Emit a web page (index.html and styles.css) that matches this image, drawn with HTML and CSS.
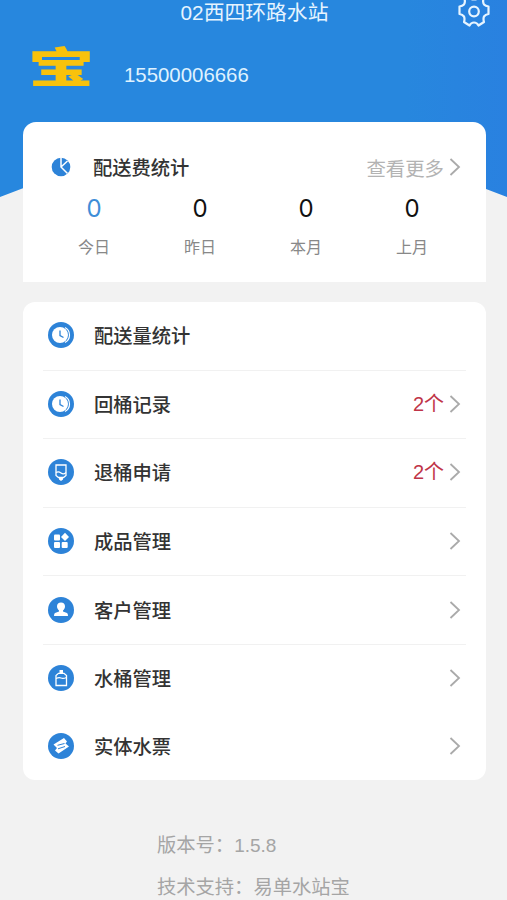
FILE: index.html
```html
<!DOCTYPE html>
<html lang="zh-CN">
<head>
    <meta charset="UTF-8">
    <meta name="viewport" content="width=device-width, initial-scale=1.0">
    <title>02西四环路水站</title>
    <link rel="stylesheet" href="styles.css">
</head>
<body>
    <div class="page">
        <div class="header">
            <h1>02西四环路水站</h1>
            <svg class="settings" viewBox="0 0 34 34" fill="none" stroke="#e6f4ff" stroke-width="2.200" stroke-linejoin="round">
                <path d="M12 2.500Q13 5.500 17 5.500T22 2.500L26.500 5Q25.500 8 27 10.500Q28.500 12 31.500 12.500V20Q28.500 20.500 27 22.500Q26 25 27 28L21.500 31.500Q20 28.500 17 28.500T12.500 31.500L7 28Q8 25 7 22.500Q5.500 20.500 2.500 20V12.500Q5.500 12 7 10.500Q8.500 8 7.500 5Z"/>
                <circle cx="17" cy="17.500" r="4.800"/>
            </svg>
        </div>
        <div class="user">
            <div class="logo"><span>宝</span></div>
            <div class="phone">15500006666</div>
        </div>

        <div class="card stats">
            <div class="stats-head">
                <svg class="icon-pie" viewBox="0 0 20 20">
                    <circle cx="10" cy="10" r="9.300" fill="#2d83d8"/>
                    <path d="M10 0V10L16.500 16.500M10 10L16.500 4" fill="none" stroke="#fff" stroke-width="1.500"/>
                </svg>
                <h2>配送费统计</h2>
                <a class="more">查看更多</a>
                <svg class="arrow" viewBox="0 0 12 20"><path d="M1.500 2L10 10L1.500 18"/></svg>
            </div>
            <div class="stats-list">
                <div class="stat active"><b>0</b><span>今日</span></div>
                <div class="stat"><b>0</b><span>昨日</span></div>
                <div class="stat"><b>0</b><span>本月</span></div>
                <div class="stat"><b>0</b><span>上月</span></div>
            </div>
        </div>

        <div class="card menu">
            <div class="row">
                <svg class="icon" viewBox="0 0 26 26">
                    <circle cx="13" cy="13" r="13" fill="#2d83d8"/>
                    <path d="M17 5.500A8.500 8.500 0 0 1 17 20.500" fill="none" stroke="#fff" stroke-width="1.200"/>
                    <circle cx="12" cy="13" r="8" fill="#fff"/>
                    <path d="M12 8.500V13.500L15.500 15.500" fill="none" stroke="#2d83d8" stroke-width="1.300"/>
                </svg>
                <h2>配送量统计</h2>
            </div>
            <div class="row">
                <svg class="icon" viewBox="0 0 26 26">
                    <circle cx="13" cy="13" r="13" fill="#2d83d8"/>
                    <path d="M17 5.500A8.500 8.500 0 0 1 17 20.500" fill="none" stroke="#fff" stroke-width="1.200"/>
                    <circle cx="12" cy="13" r="8" fill="#fff"/>
                    <path d="M12 8.500V13.500L15.500 15.500" fill="none" stroke="#2d83d8" stroke-width="1.300"/>
                </svg>
                <h2>回桶记录</h2>
                <span class="count">2个</span>
                <svg class="arrow" viewBox="0 0 12 20"><path d="M1.500 2L10 10L1.500 18"/></svg>
            </div>
            <div class="row">
                <svg class="icon" viewBox="0 0 26 26">
                    <circle cx="13" cy="13" r="13" fill="#2d83d8"/>
                    <path d="M8 6H18V16.500L15.500 18.500H10.500L8 16.500Z" fill="none" stroke="#fff" stroke-width="1.300"/>
                    <path d="M8 13.500Q10.500 12 13 14T18 13.500" fill="none" stroke="#fff" stroke-width="1.200"/>
                    <path d="M11 19H15V20.500L13 22L11 20.500Z" fill="#fff"/>
                </svg>
                <h2>退桶申请</h2>
                <span class="count">2个</span>
                <svg class="arrow" viewBox="0 0 12 20"><path d="M1.500 2L10 10L1.500 18"/></svg>
            </div>
            <div class="row">
                <svg class="icon" viewBox="0 0 26 26">
                    <circle cx="13" cy="13" r="13" fill="#2d83d8"/>
                    <g fill="#fff">
                        <rect x="6" y="6.500" width="6" height="6" rx="1"/>
                        <rect x="6" y="14" width="6" height="6" rx="1"/>
                        <rect x="13.700" y="14" width="6" height="6" rx="1"/>
                        <path d="M17 4.700L21 8.900L17 13.100L13 8.900Z"/>
                    </g>
                </svg>
                <h2>成品管理</h2>
                <svg class="arrow" viewBox="0 0 12 20"><path d="M1.500 2L10 10L1.500 18"/></svg>
            </div>
            <div class="row">
                <svg class="icon" viewBox="0 0 26 26">
                    <circle cx="13" cy="13" r="13" fill="#2d83d8"/>
                    <path d="M13 5.500C15.500 5.500 17 7 17 9.300C17 11.500 16 12.500 15 13.500V14.500L19 16Q20 16.500 20 19H6Q6 16.500 7 16L11 14.500V13.500C10 12.500 9 11.500 9 9.300C9 7 10.500 5.500 13 5.500Z" fill="#fff"/>
                </svg>
                <h2>客户管理</h2>
                <svg class="arrow" viewBox="0 0 12 20"><path d="M1.500 2L10 10L1.500 18"/></svg>
            </div>
            <div class="row last-line">
                <svg class="icon" viewBox="0 0 26 26">
                    <circle cx="13" cy="13" r="13" fill="#2d83d8"/>
                    <path d="M11.500 5H15V8H11.500Z" fill="#fff"/>
                    <path d="M10.500 8.300H16L18.500 10.500V20.500H8V10.500Z" fill="none" stroke="#fff" stroke-width="1.300"/>
                    <path d="M8 13.500Q11 12 13 13T18.500 12.500" fill="none" stroke="#fff" stroke-width="1.100"/>
                </svg>
                <h2>水桶管理</h2>
                <svg class="arrow" viewBox="0 0 12 20"><path d="M1.500 2L10 10L1.500 18"/></svg>
            </div>
            <div class="row">
                <svg class="icon" viewBox="0 0 26 26">
                    <circle cx="13" cy="13" r="13" fill="#2d83d8"/>
                    <path d="M5.500 11.500L16 5L19 8.500L17.500 10.500L21 13.500L10.500 20.500L7 17.500L9 15Z" fill="#fff"/>
                    <path d="M9.500 12.300L16.500 10.500M10 15.800L17 13.500" stroke="#2d83d8" stroke-width="1"/>
                </svg>
                <h2>实体水票</h2>
                <svg class="arrow" viewBox="0 0 12 20"><path d="M1.500 2L10 10L1.500 18"/></svg>
            </div>
        </div>

        <div class="footer">
            <p>版本号：<span class="version">1.5.8</span></p>
            <p>技术支持：易单水站宝</p>
        </div>
    </div>
</body>
</html>
```

FILE: styles.css
```css
* {
    box-sizing: border-box;
}
body {
    margin: 0;
    background-color: #f2f2f2;
    font-family: "Noto Sans CJK SC", sans-serif;
    color: #333;
}
h1, h2, p {
    margin: 0;
}
.page {
    position: relative;
    height: 900px;
    padding: 0 21px 0 23px;
    overflow: hidden;
}
/* blue background behind the header */
.page::before {
    content: "";
    position: absolute;
    top: 0;
    left: 0;
    right: 0;
    height: 197px;
    z-index: -1;
    background: linear-gradient(90deg, #2787de 80%, #2981e0);
    clip-path: polygon(0 0, 100% 0, 100% 100%, 410px 160px, 97px 160px, 0 100%);
}
.header {
    display: flex;
    justify-content: center;
    height: 28px;
    position: relative;
}
.header h1 {
    font-family: "Liberation Sans", "Noto Sans CJK SC", sans-serif;
    font-size: 20.8px;
    font-weight: 400;
    line-height: 26px;
    color: #e6f4ff;
}
.settings {
    position: absolute;
    width: 34px;
    height: 34px;
    right: -5px;
    top: -6px;
}
.user {
    display: flex;
    align-items: center;
    height: 94px;
}
.logo {
    width: 101px;
    height: 62px;
    padding-left: 5px;
    font-size: 42px;
    font-weight: 900;
    line-height: 42px;
    color: #f8c20c;
}
.logo span {
    display: inline-block;
    transform: scaleX(1.58);
    transform-origin: 0 50%;
}
.phone {
    font-family: "Liberation Sans", sans-serif;
    font-size: 20.4px;
    line-height: 30px;
    color: #dff2ff;
}
.card {
    background-color: #fff;
}
.stats {
    height: 160px;
    padding: 29px 21px 0 28px;
    border-radius: 13px 13px 0 0;
}
.stats-head {
    display: flex;
    align-items: center;
    height: 32px;
}
h2 {
    flex: 1;
    font-size: 19.3px;
    font-weight: 500;
    line-height: 30px;
}
.icon-pie {
    width: 20px;
    height: 20px;
    margin-right: 22px;
}
.more {
    font-size: 19.4px;
    color: #b3b3b3;
}
.arrow {
    width: 12px;
    height: 20px;
    margin-left: 5px;
    margin-right: 4px;
    fill: none;
    stroke: #aaa;
    stroke-width: 1.8;
}
.stats-list {
    display: grid;
    grid-template-columns: repeat(4, 106px);
    margin-top: 12px;
    margin-left: -10px;
}
.stat {
    display: flex;
    flex-direction: column;
    align-items: center;
}
.stat b {
    font-family: Inter, sans-serif;
    font-size: 24px;
    font-weight: 400;
    line-height: 28px;
    color: #111;
}
.stat span {
    margin-top: 11px;
    font-size: 16px;
    line-height: 24px;
    color: #888;
}
.stat.active b {
    color: #3e8ed8;
}
.menu {
    height: 478px;
    margin-top: 20px;
    padding: 0 20px;
    border-radius: 12px;
}
.menu .arrow {
    margin-right: 5px;
}
.row {
    display: flex;
    align-items: center;
    height: 68.6px;
    padding-left: 5px;
    padding-bottom: 1px;
    border-bottom: 1px solid #f1f1f1;
}
.row.last-line {
    height: 67px;
    padding-bottom: 0;
    border: none;
}
.row:last-child {
    border: none;
}
.icon {
    width: 26px;
    height: 26px;
    margin-right: 19px;
}
.menu h2 {
    padding-left: 1px;
}
.count {
    font-family: "Liberation Sans", "Noto Sans CJK SC", sans-serif;
    font-size: 20px;
    line-height: 26px;
    color: #bf3448;
}
.footer {
    padding: 44px 0 0 134px;
    font-size: 19.3px;
    line-height: 40px;
    color: #a5a5a5;
}
.version {
    font-family: "Liberation Sans", sans-serif;
    font-size: 19px;
}
```
